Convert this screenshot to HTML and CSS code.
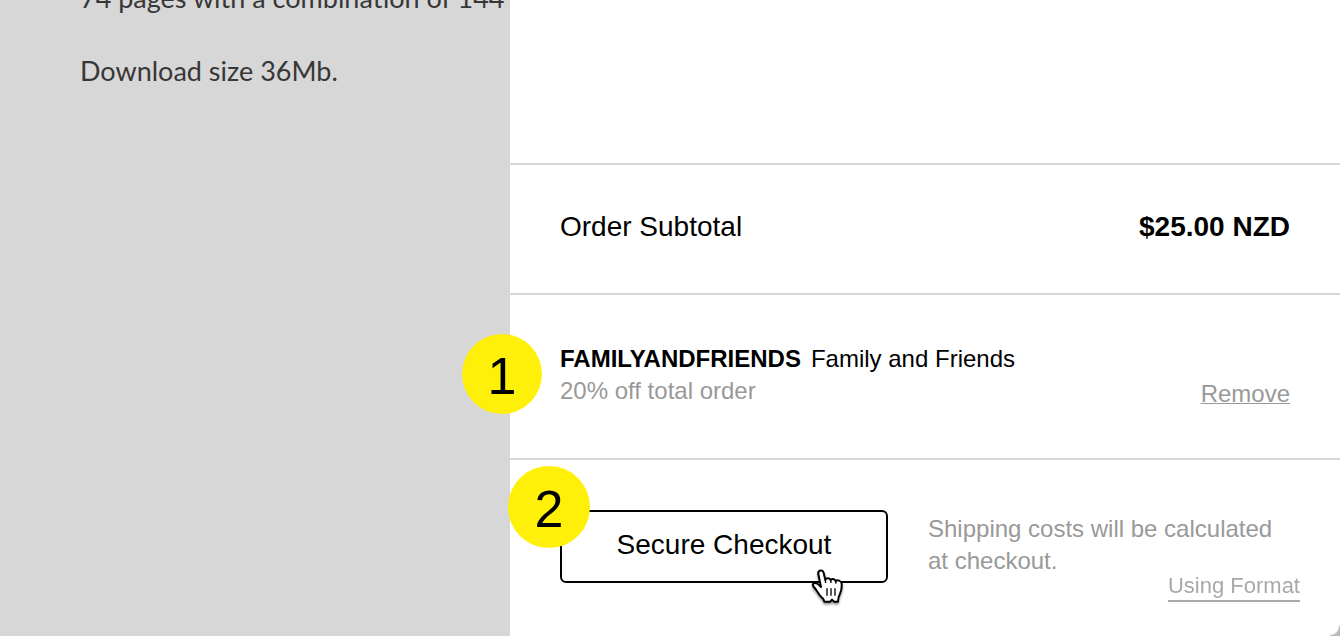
FILE: index.html
```
<!DOCTYPE html>
<html lang="en">
<head>
    <meta charset="utf-8">
    <title>Cart</title>
    <link rel="stylesheet" href="styles.css">
</head>
<body>
    <div class="page">
        <div class="product">
            <p>74 pages with a combination of 144 c</p>
            <p>Download size 36Mb.</p>
        </div>

        <div class="cart">
            <div class="items"></div>

            <div class="row subtotal">
                <span>Order Subtotal</span>
                <strong>$25.00 NZD</strong>
            </div>

            <div class="row discount">
                <span class="step step-one">1</span>
                <div>
                    <div class="code"><strong>FAMILYANDFRIENDS</strong><span>Family and Friends</span></div>
                    <div class="muted">20% off total order</div>
                </div>
                <a class="remove" href="#">Remove</a>
            </div>

            <div class="row checkout">
                <span class="step step-two">2</span>
                <div class="button-wrap">
                    <button type="button">Secure Checkout</button>
                    <!-- hand pointer -->
                    <svg class="pointer" viewBox="60 54 105 114" aria-hidden="true">
                        <path d="M103 155 L100 147 C92 140 84 129 78 119 C74 112 65 107 69 102 C74 97 83 101 89 107 L93 111 C91 100 87 84 85 72 C83 60 98 58 101 68 L106 90 C107 83 120 83 122 91 C124 85 135 85 137 94 C141 88 154 92 155 101 C156 115 154 123 150 131 C146 139 144 144 144 155 L132 155 L126 149 L121 155 Z"/>
                        <path class="line" d="M106 90 L107 99 M122 91 L123 99 M137 94 L138 101"/>
                        <path class="line" d="M111 115 V137 M123 115 V137 M135 115 V137"/>
                    </svg>
                </div>
                <p class="muted">Shipping costs will be calculated at checkout.</p>
            </div>
        </div>
    </div>

    <a class="credit" href="#">Using Format</a>
    <span class="corner"></span>
</body>
</html>
```

FILE: styles.css
```
* {
    box-sizing: border-box;
}

body {
    margin: 0;
    background: #d7d7d7;
    color: #000;
    font-family: "Liberation Sans", Arial, sans-serif;
    font-size: 24px;
    line-height: 32px;
}

p {
    margin: 0;
}

.page {
    display: grid;
    grid-template-columns: 510px 1fr;
    min-height: 100vh;
}

.product {
    overflow: hidden;
    padding-left: 80px;
    color: #373737;
    font-family: Lato, sans-serif;
    font-size: 27px;
    font-weight: 400;
    line-height: 40px;
    white-space: nowrap;
}

.product p {
    margin-bottom: 33px;
}

.product p:first-child {
    margin-top: -22px;
}

.cart {
    background: #fff;
}

.items {
    height: 163px;
}

.row {
    position: relative;
    display: flex;
    border-top: 2px solid #d7d7d7;
    padding: 48px 50px;
}

.subtotal {
    justify-content: space-between;
    font-size: 28px;
    padding-top: 46px;
    padding-bottom: 50px;
}

.discount {
    justify-content: space-between;
    align-items: flex-end;
    padding-bottom: 48px;
}

.code {
    display: flex;
    gap: 10px;
}

.discount .muted {
    padding-bottom: 3px;
}

.muted {
    color: #999;
}

.remove {
    color: #999;
    text-decoration-thickness: 1px;
}

.checkout {
    gap: 40px;
    padding-top: 50px;
    padding-bottom: 52px;
}

.checkout .muted {
    padding-top: 3px;
}

.button-wrap {
    position: relative;
    flex: none;
}

button {
    width: 328px;
    height: 73px;
    padding: 0 0 4px;
    border: 2px solid #000;
    border-radius: 6px;
    background: #fff;
    color: #000;
    font-family: inherit;
    font-size: 28px;
    cursor: pointer;
}

.pointer {
    position: absolute;
    left: 250px;
    top: 58px;
    width: 35px;
    height: 38px;
    overflow: visible;
    fill: #fff;
    stroke: #000;
    stroke-width: 6;
    stroke-linejoin: round;
    filter: drop-shadow(0 2px 1px rgba(0, 0, 0, 0.4));
}

.pointer .line {
    fill: none;
    stroke-width: 4;
}

.step {
    position: absolute;
    z-index: 1;
    border-radius: 50%;
    background: #fff00a;
    font-size: 52px;
    text-align: center;
}

.step-one {
    left: -48px;
    top: 39px;
    width: 80px;
    height: 80px;
    line-height: 84px;
}

.step-two {
    left: -2px;
    top: 6px;
    width: 82px;
    height: 82px;
    line-height: 86px;
}

.credit {
    position: fixed;
    right: 40px;
    bottom: 34px;
    border-bottom: 2px solid #a9a9a9;
    color: #a9a9a9;
    font-size: 22px;
    line-height: 28px;
    text-decoration: none;
}

/* rounded window corner */
.corner {
    position: fixed;
    right: 0;
    bottom: 0;
    width: 10px;
    height: 10px;
    background: radial-gradient(circle at 0 0, #fff 8px, #b9b9b9 10px);
}
```
